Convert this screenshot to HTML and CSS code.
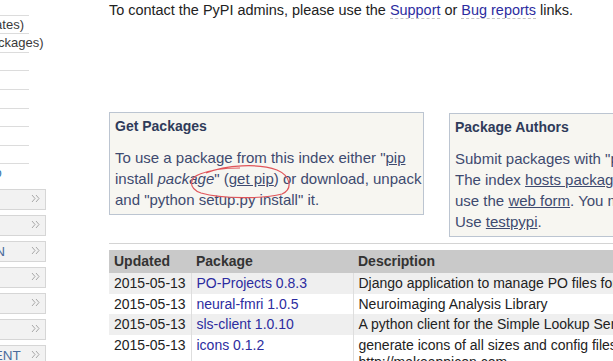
FILE: index.html
```html
<!DOCTYPE html>
<html lang="en">
<head>
    <meta charset="UTF-8">
    <title>PyPI - the Python Package Index</title>
    <link rel="stylesheet" href="styles.css">
</head>
<body>
    <div class="page">
        <aside class="sidebar">
            <ul class="nav">
                <li>List trove classifiers</li>
                <li>RSS (latest 40 updates)</li>
                <li>RSS (newest 40 packages)</li>
                <li>Python 3 Packages</li>
                <li>PyPI Tutorial</li>
                <li>PyPI Security</li>
                <li>PyPI Support</li>
                <li>PyPI Bug Reports</li>
                <li>PyPI Discussion</li>
                <li class="last"><a href="#">PyPI Developer Info</a></li>
            </ul>
            <ul class="menu">
                <li>ABOUT <svg class="chev" viewBox="0 0 9 9"><polyline points="1,1 4,4.5 1,8"/><polyline points="5,1 8,4.5 5,8"/></svg></li>
                <li>NEWS <svg class="chev" viewBox="0 0 9 9"><polyline points="1,1 4,4.5 1,8"/><polyline points="5,1 8,4.5 5,8"/></svg></li>
                <li>DOCUMENTATION <svg class="chev" viewBox="0 0 9 9"><polyline points="1,1 4,4.5 1,8"/><polyline points="5,1 8,4.5 5,8"/></svg></li>
                <li>DOWNLOAD <svg class="chev" viewBox="0 0 9 9"><polyline points="1,1 4,4.5 1,8"/><polyline points="5,1 8,4.5 5,8"/></svg></li>
                <li>COMMUNITY <svg class="chev" viewBox="0 0 9 9"><polyline points="1,1 4,4.5 1,8"/><polyline points="5,1 8,4.5 5,8"/></svg></li>
                <li>FOUNDATION <svg class="chev" viewBox="0 0 9 9"><polyline points="1,1 4,4.5 1,8"/><polyline points="5,1 8,4.5 5,8"/></svg></li>
                <li>CORE DEVELOPMENT <svg class="chev" viewBox="0 0 9 9"><polyline points="1,1 4,4.5 1,8"/><polyline points="5,1 8,4.5 5,8"/></svg></li>
            </ul>
        </aside>

        <main class="content">
            <p class="contact">To contact the PyPI admins, please use the <a href="#">Support</a> or <a href="#">Bug reports</a> links.</p>

            <div class="boxes">
                <div class="box get">
                    <h3>Get Packages</h3>
                    <p>To use a package from this index either "<a href="#">pip</a><br>
                    install <i>package</i>" (<a href="#">get pip</a>) or download, unpack<br>
                    and "python setup.py install" it.</p>
                    <!-- marca feita a mão na captura -->
                    <svg class="scribble" viewBox="109 112 315 103">
                        <path d="M 206 173 C 226 165, 258 163, 277 170 C 291 176, 293 189, 282 194 C 264 199, 222 199, 201 193 C 188 188, 189 178, 200 174 C 210 170, 222 168, 240 168"/>
                    </svg>
                </div>
                <div class="box authors">
                    <h3>Package Authors</h3>
                    <p>Submit packages with "<a href="#">python setup.py upload</a>".<br>
                    The index <a href="#">hosts packages</a> for you, or you can<br>
                    use the <a href="#">web form</a>. You must <a href="#">register</a> first.<br>
                    Use <a href="#">testpypi</a>.</p>
                </div>
            </div>

            <div class="rule"></div>

            <table class="latest">
                <tr>
                    <th class="col-date">Updated</th>
                    <th class="col-pkg">Package</th>
                    <th>Description</th>
                </tr>
                <tr>
                    <td>2015-05-13</td>
                    <td><a href="#">PO-Projects 0.8.3</a></td>
                    <td>Django application to manage PO files for translation projects</td>
                </tr>
                <tr>
                    <td>2015-05-13</td>
                    <td><a href="#">neural-fmri 1.0.5</a></td>
                    <td>Neuroimaging Analysis Library</td>
                </tr>
                <tr>
                    <td>2015-05-13</td>
                    <td><a href="#">sls-client 1.0.10</a></td>
                    <td>A python client for the Simple Lookup Service</td>
                </tr>
                <tr>
                    <td>2015-05-13</td>
                    <td><a href="#">icons 0.1.2</a></td>
                    <td>generate icons of all sizes and config files for your app http://makeappicon.com</td>
                </tr>
            </table>
        </main>
    </div>
</body>
</html>
```

FILE: styles.css
```css
/* Geral */
* {
    box-sizing: border-box;
    margin: 0;
    padding: 0;
}

body {
    font-family: 'Liberation Sans', Arial, sans-serif;
    background: #fff;
    color: #222;
    overflow: hidden;
}

.page {
    display: flex;
    align-items: flex-start;
}

/* Barra lateral (cortada à esquerda) */
.sidebar {
    flex: none;
    width: 171px;
    margin-left: -125px;
}

.nav {
    list-style: none;
    width: 154px;
    margin-top: -4px;
    font-size: 13px;
    color: #3a3a3a;
}

.nav li {
    border-top: 1px solid #dcdcdc;
    height: 18.6px;
    line-height: 18px;
    padding-left: 11px;
    white-space: nowrap;
}

.nav li.last a {
    color: #3776ab;
    text-decoration: none;
}

.menu {
    list-style: none;
    margin-top: 7px;
}

.menu li {
    position: relative;
    height: 21px;
    margin-bottom: 5px;
    padding-right: 28px;
    background: #f2f2f2;
    border: 1px solid #d6d6d6;
    font-size: 13.5px;
    line-height: 19px;
    text-align: center;
    color: #4a6b9c;
    white-space: nowrap;
    overflow: hidden;
}

.menu .chev {
    position: absolute;
    right: 5px;
    top: 4px;
    width: 9px;
    height: 9px;
    fill: none;
    stroke: #a8a8a8;
    stroke-width: 1;
    background: #f2f2f2;
}

/* Conteúdo */
.content {
    flex: none;
    width: 700px;
    margin-left: 63px;
}

.contact {
    font-size: 14.45px;
    line-height: 20px;
    color: #222;
}

.contact a {
    color: #2c2ca0;
    text-decoration: none;
    border-bottom: 1px dashed #c4c4c4;
}

.boxes {
    display: flex;
    align-items: flex-start;
    gap: 25px;
    margin-top: 92px;
}

.box {
    position: relative;
    background: #f7f6f1;
    border: 1px solid #bcc5d1;
    padding: 4px 1px 4px 5px;
    color: #3e4a6f;
}

.box h3 {
    font-size: 14px;
    line-height: 18px;
    margin-bottom: 12px;
    color: #2f3b5a;
}

.box p {
    font-size: 15px;
    line-height: 21px;
    white-space: nowrap;
}

.box a {
    color: #3e4a6f;
}

.get {
    width: 315px;
}

.authors {
    width: 360px;
    margin-top: 1px;
}

.scribble {
    position: absolute;
    left: -1px;
    top: -1px;
    width: 315px;
    height: 103px;
    fill: none;
    stroke: #e0555a;
    stroke-width: 1.2;
    pointer-events: none;
}

.rule {
    border-top: 1px solid #d4d4d4;
    margin-top: 6px;
}

/* Tabela de atualizações */
.latest {
    margin-top: 6px;
    width: 650px;
    table-layout: fixed;
    border-collapse: collapse;
    font-size: 14px;
}

.latest th {
    background: #c9c9c9;
    color: #333;
    text-align: left;
    padding: 3px 5px;
    line-height: 17px;
}

.latest .col-date {
    width: 82px;
}

.latest .col-pkg {
    width: 162px;
}

.latest td {
    padding: 2px 5px;
    line-height: 16.7px;
    vertical-align: top;
    white-space: nowrap;
}

.latest td + td {
    border-left: 1px solid #dedede;
}

.latest td:last-child {
    white-space: normal;
}

.latest tr:nth-child(even) td {
    background: #efefef;
}

.latest td a {
    color: #2c2ca0;
    text-decoration: none;
}
```
